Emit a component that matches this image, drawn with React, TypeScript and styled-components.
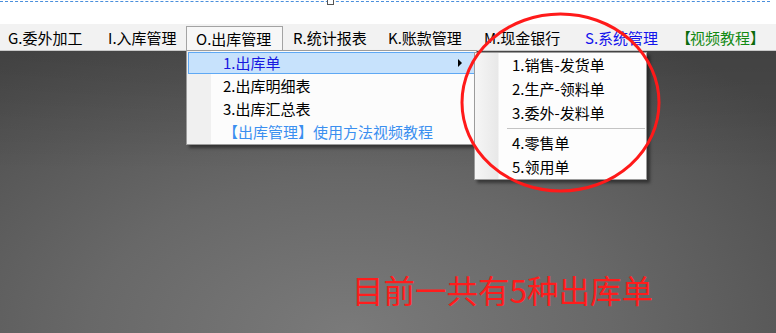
import React from "react";
import styled, { createGlobalStyle } from "styled-components";

const Global = createGlobalStyle`
  html, body { margin: 0; padding: 0; width: 776px; height: 333px; overflow: hidden; }
  body { font-family: "Noto Sans CJK SC", "Microsoft YaHei", sans-serif; }
  #root { width: 776px; height: 333px; }
`;

const Screen = styled.div`
  position: relative;
  width: 776px;
  height: 333px;
  display: flex;
  flex-direction: column;
  overflow: hidden;
`;

const Ruler = styled.div`
  position: relative;
  height: 24px;
  flex: none;
  background: #ffffff;
  &::before {
    content: "";
    display: block;
    margin-top: 1px;
    margin-right: 6px;
    border-top: 1px dashed #4a8fdc;
  }
`;

const Handle = styled.div`
  position: absolute;
  left: 327px;
  top: -1px;
  width: 5px;
  height: 4px;
  background: #fff;
  border: 1px solid #555;
`;

const MenuBar = styled.div`
  height: 26px;
  flex: none;
  display: flex;
  align-items: stretch;
  background: #f2f2f2;
  font-size: 15px;
  line-height: 20px;
  position: relative;
  z-index: 2;
`;

const MenuItem = styled.div<{ $color?: string; $open?: boolean; $w: number }>`
  position: relative;
  box-sizing: border-box;
  flex: none;
  width: ${(p) => p.$w}px;
  display: flex;
  align-items: center;
  padding: 2px 0 0 10px;
  color: ${(p) => p.$color || "#000"};
  white-space: nowrap;
  &:first-child { padding-left: 8px; }
  ${(p) =>
    p.$open &&
    `
    margin-top: 2px;
    padding: 0 0 0 9px;
    border: 1px solid #a3a3a3;
    border-bottom: none;
    background: #f7f7f7;
  `}
`;

const Bracket = styled.span<{ $open?: boolean }>`
  color: #0b6b0b;
  margin: ${(p) => (p.$open ? "0 -1px 0 -8px" : "0 -8px 0 0")};
`;

const Dropdown = styled.div`
  position: absolute;
  top: 100%;
  left: -1px;
  width: 289px;
  border: 1px solid #9c9c9c;
  background: linear-gradient(to right, #f0f0f0 0, #f0f0f0 24px, #fcfcfc 24px);
  box-shadow: 3px 3px 3px rgba(0, 0, 0, 0.45);
  color: #000;
`;

const DropItem = styled.div<{ $active?: boolean; $color?: string }>`
  position: relative;
  height: 22px;
  margin: 1px;
  box-sizing: border-box;
  display: flex;
  align-items: center;
  padding-left: ${(p) => (p.$active ? "34px" : "35px")};
  color: ${(p) => p.$color || "#000"};
  ${(p) =>
    p.$active &&
    `
    background: #c7e2fc;
    border: 1px solid #5ea8f4;
  `}
`;

const Arrow = styled.span`
  margin-left: auto;
  margin-right: 12px;
  width: 0;
  height: 0;
  border-top: 4px solid transparent;
  border-bottom: 4px solid transparent;
  border-left: 4px solid #000;
`;

const SubMenu = styled.div`
  position: absolute;
  left: 285px;
  top: -1px;
  width: 171px;
  border: 1px solid #9c9c9c;
  background: linear-gradient(to right, #f6f6f6 0, #e8e8e8 23px, #fdfdfd 24px);
  box-shadow: 3px 3px 3px rgba(0, 0, 0, 0.45);
  color: #000;
`;

const SubItem = styled.div`
  height: 24px;
  display: flex;
  align-items: center;
  padding-left: 37px;
`;

const Separator = styled.div`
  height: 6px;
  display: flex;
  align-items: center;
  padding-left: 32px;
  padding-right: 1px;
  &::after {
    content: "";
    flex: 1;
    border-top: 1px solid #c4c4c4;
  }
`;

const Workspace = styled.div`
  flex: 1;
  display: flex;
  align-items: flex-end;
  padding: 0 0 28px 352px;
  background:
    linear-gradient(to bottom, rgba(0, 0, 0, 0.12), rgba(0, 0, 0, 0) 120px),
    radial-gradient(ellipse 75% 120% at 45% 100%, #7a7a7a 0%, #686868 45%, #4b4b4b 100%);
  border-top: 1px solid #c9c9c9;
`;

const Caption = styled.div`
  font-size: 31.5px;
  line-height: 32px;
  color: #ff1c1c;
  white-space: nowrap;
`;

const CircleMark = styled.svg`
  position: absolute;
  left: 459px;
  top: 11px;
  z-index: 5;
  pointer-events: none;
`;

export default function App() {
  return (
    <Screen>
      <Global />
      <Ruler>
        <Handle />
      </Ruler>
      <MenuBar>
        <MenuItem $w={98}>G.委外加工</MenuItem>
        <MenuItem $w={88}>I.入库管理</MenuItem>
        <MenuItem $w={97} $open>
          O.出库管理
          <Dropdown>
            <DropItem $active $color="#1818e0">
              1.出库单
              <Arrow />
              <SubMenu>
                <SubItem>1.销售-发货单</SubItem>
                <SubItem>2.生产-领料单</SubItem>
                <SubItem>3.委外-发料单</SubItem>
                <Separator />
                <SubItem>4.零售单</SubItem>
                <SubItem>5.领用单</SubItem>
              </SubMenu>
            </DropItem>
            <DropItem>2.出库明细表</DropItem>
            <DropItem>3.出库汇总表</DropItem>
            <DropItem $color="#3a8ff0">【出库管理】使用方法视频教程</DropItem>
          </Dropdown>
        </MenuItem>
        <MenuItem $w={95}>R.统计报表</MenuItem>
        <MenuItem $w={96}>K.账款管理</MenuItem>
        <MenuItem $w={101}>M.现金银行</MenuItem>
        <MenuItem $w={99} $color="#1414ec">S.系统管理</MenuItem>
        <MenuItem $w={102} $color="#138a13">
          <Bracket $open>【</Bracket>视频教程<Bracket>】</Bracket>
        </MenuItem>
      </MenuBar>
      <Workspace>
        <Caption>目前一共有5种出库单</Caption>
      </Workspace>
      <CircleMark width="204" height="184" viewBox="0 0 204 184">
        <ellipse cx="101.5" cy="91.5" rx="98.5" ry="88.5" fill="none" stroke="#ff1a1a" strokeWidth="3" />
      </CircleMark>
    </Screen>
  );
}
